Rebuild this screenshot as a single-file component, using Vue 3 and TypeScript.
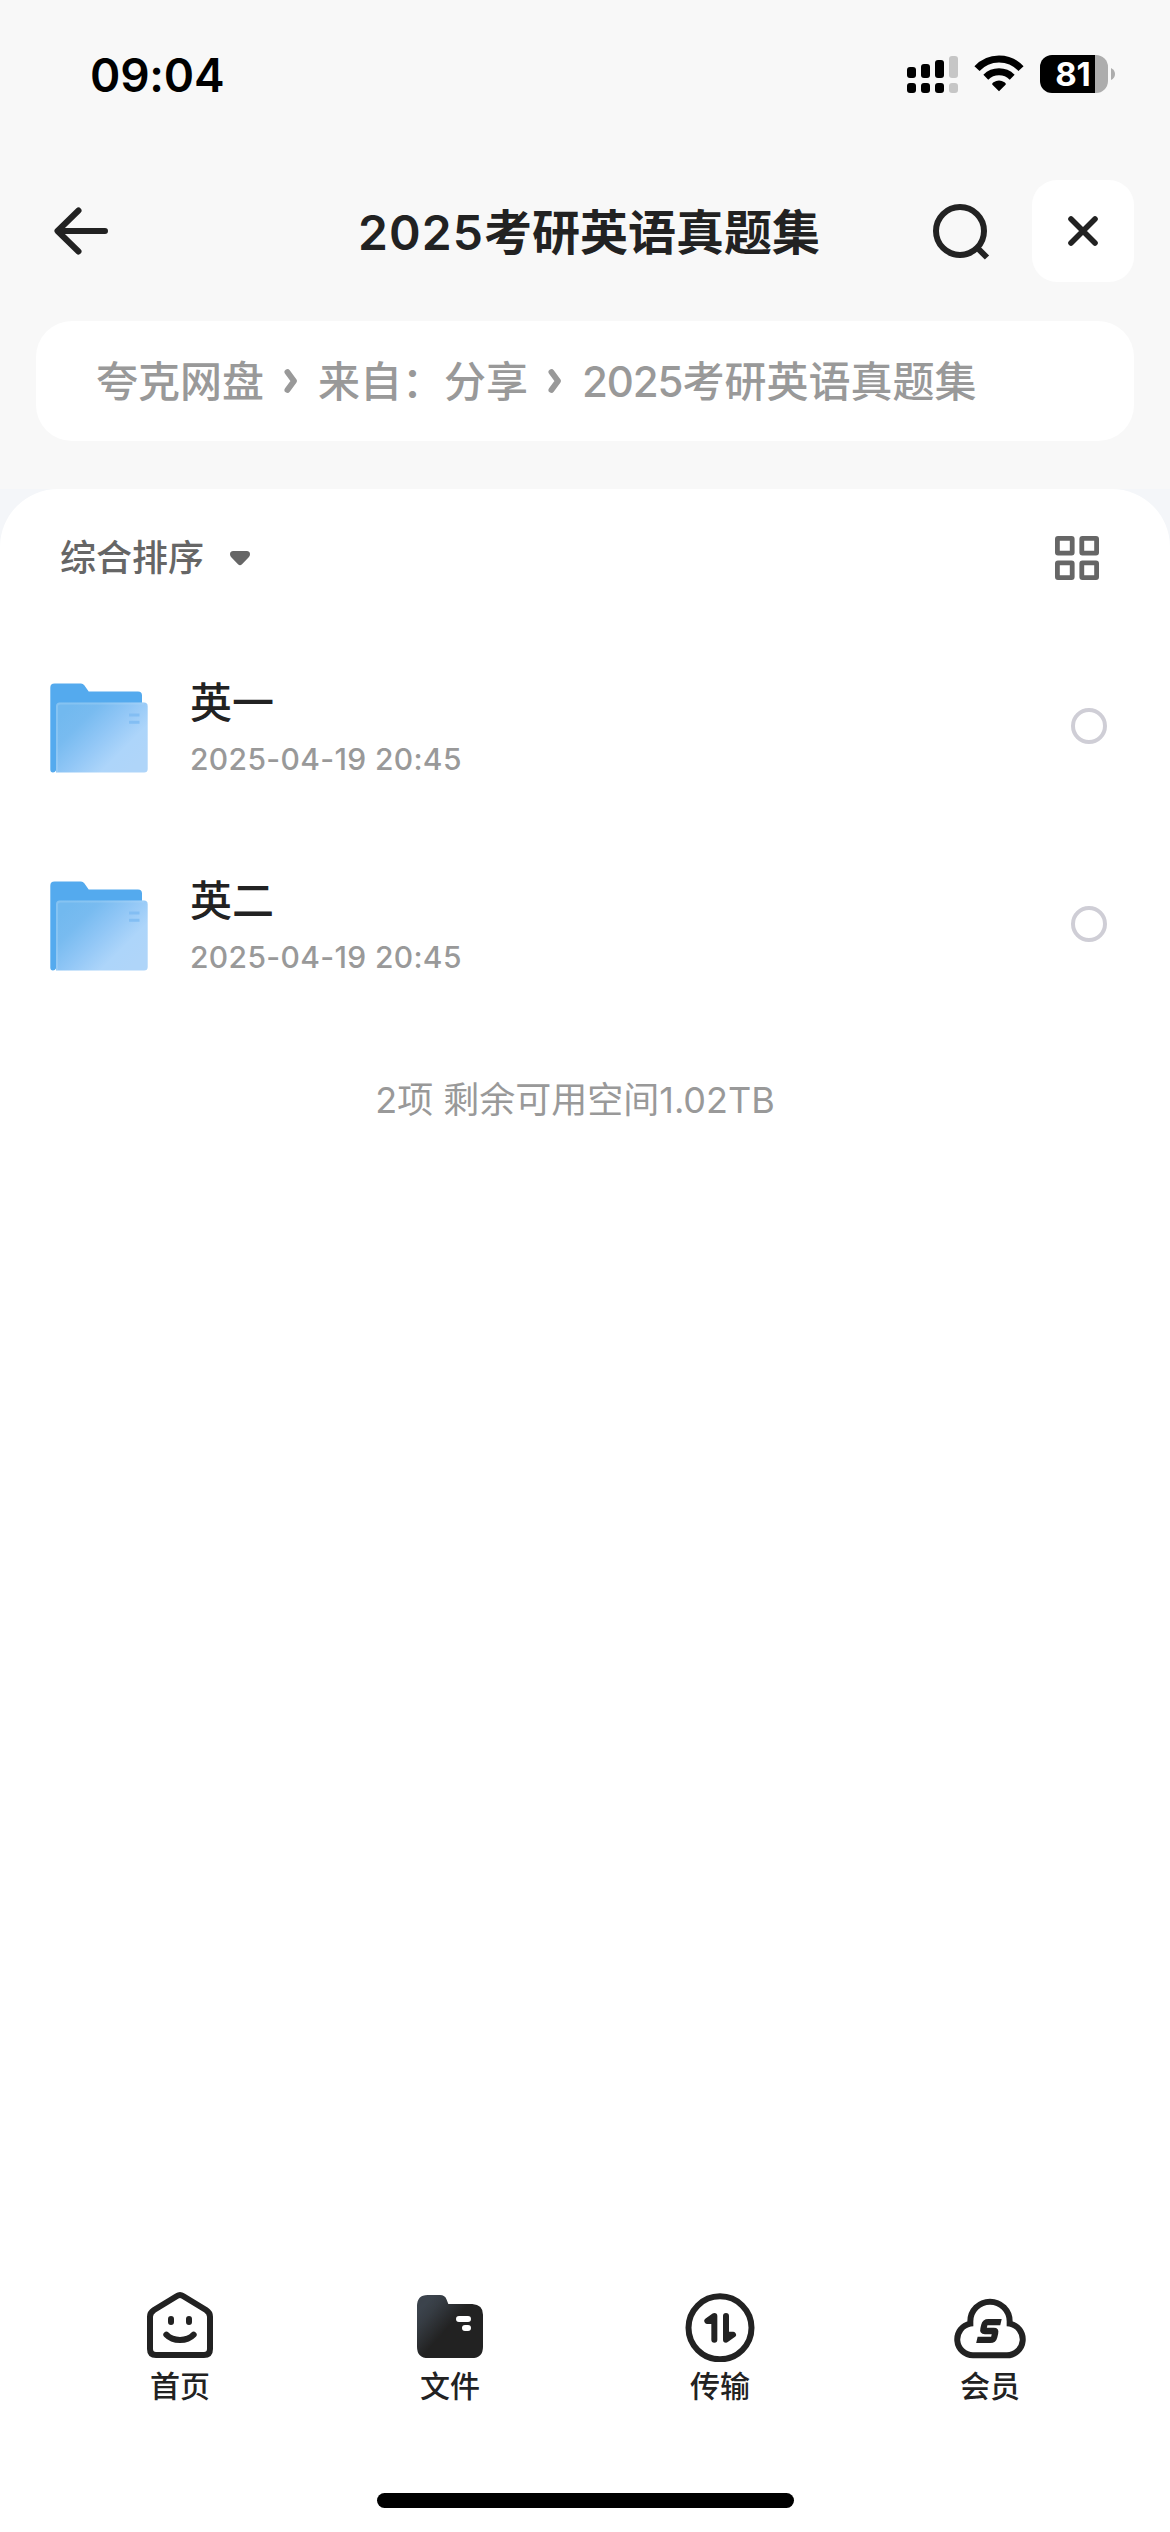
<script setup lang="ts">
interface FileItem {
  name: string
  modified: string
}

type TabIcon = 'home' | 'files' | 'transfer' | 'vip'

interface Tab {
  icon: TabIcon
  label: string
}

const signalBars = [
  { height: 11, active: true },
  { height: 14, active: true },
  { height: 18, active: true },
  { height: 22, active: false },
]

const files: FileItem[] = [
  { name: '英一', modified: '2025-04-19 20:45' },
  { name: '英二', modified: '2025-04-19 20:45' },
]

const tabs: Tab[] = [
  { icon: 'home', label: '首页' },
  { icon: 'files', label: '文件' },
  { icon: 'transfer', label: '传输' },
  { icon: 'vip', label: '会员' },
]
</script>

<template>
  <div class="screen">
    <div class="status-bar">
      <span class="time">09:04</span>
      <div class="status-icons">
        <div class="signal">
          <div v-for="(bar, i) in signalBars" :key="i" class="bar" :class="{ off: !bar.active }">
            <i :style="{ height: bar.height + 'px' }"></i>
            <i class="dot"></i>
          </div>
        </div>
        <svg class="wifi" width="50" height="38" viewBox="0 0 50 38" fill="none">
          <path d="M3 14.6A29.8 29.8 0 0 1 47 14.6" stroke="#000" stroke-width="7" />
          <path d="M11.8 23.2A19 19 0 0 1 38.2 23.2" stroke="#000" stroke-width="7" />
          <path d="M25 37.2L18.200 30.4Q17.9 29.200 19.500 28.200A10 10 0 0 1 30.500 28.200Q32.100 29.200 31.800 30.400Z" fill="#000" />
        </svg>
        <div class="battery"><span>81</span></div>
        <svg class="nub" width="4" height="12" viewBox="0 0 4 12"><path d="M0 0Q4 2 4 6T0 12Z" fill="#adadad" /></svg>
      </div>
    </div>

    <header class="header">
      <svg class="back" width="60" height="60" viewBox="0 0 60 60" fill="none" stroke="#222" stroke-width="6" stroke-linecap="round" stroke-linejoin="round">
        <path d="M27.5 9.5L6.5 30L27.5 50.5M7 30H54" />
      </svg>
      <h1><span class="num">2025</span>考研英语真题集</h1>
      <svg class="search" width="60" height="60" viewBox="0 0 60 60" fill="none" stroke="#222" stroke-width="6">
        <circle cx="30" cy="30" r="24" />
        <path d="M46.5 46L57 56.5" />
      </svg>
      <button class="close" aria-label="close">
        <svg width="36" height="36" viewBox="0 0 36 36" fill="none" stroke="#222" stroke-width="5.6" stroke-linecap="round">
          <path d="M6 6L30 30M30 6L6 30" />
        </svg>
      </button>
    </header>

    <nav class="crumbs">
      <span>夸克网盘</span>
      <svg class="chevron" width="14" height="26" viewBox="0 0 14 26"><path d="M3.4 4L10 13L3.4 22" /></svg>
      <span>来自：分享</span>
      <svg class="chevron" width="14" height="26" viewBox="0 0 14 26"><path d="M3.4 4L10 13L3.4 22" /></svg>
      <span><span class="num">2025</span>考研英语真题集</span>
    </nav>

    <div class="sheet-wrap">
      <main class="sheet">
        <div class="toolbar">
          <div class="sort">
            <span>综合排序</span>
            <svg width="20" height="15" viewBox="0 0 20 15"><path d="M3.2 0H16.8Q20 .2 20 3.2Q20 5 18.5 6.5L12 13.3Q10 15.4 8 13.3L1.5 6.5Q0 5 0 3.2Q0 .2 3.2 0Z" fill="#666" /></svg>
          </div>
          <svg class="grid" width="44" height="44" viewBox="0 0 44 44" fill="none" stroke="#666" stroke-width="4.8">
            <rect x="2.4" y="2.4" width="14.8" height="14.8" rx=".6" />
            <rect x="26.8" y="2.4" width="14.8" height="14.8" rx=".6" />
            <rect x="2.4" y="26.8" width="14.8" height="14.8" rx=".6" />
            <rect x="26.8" y="26.8" width="14.8" height="14.8" rx=".6" />
          </svg>
        </div>

        <ul class="list">
          <li v-for="file in files" :key="file.name">
            <svg class="folder" width="98" height="90" viewBox="0 0 98 90">
              <defs>
                <linearGradient id="folderFront" x1="18" y1="25" x2="80" y2="87" gradientUnits="userSpaceOnUse">
                  <stop offset="0" stop-color="#72b9ef" />
                  <stop offset=".22" stop-color="#78bbf0" />
                  <stop offset=".5" stop-color="#92c7f6" />
                  <stop offset=".78" stop-color="#add5fa" />
                  <stop offset="1" stop-color="#afd5f9" />
                </linearGradient>
              </defs>
              <path d="M4.5 .5H31Q33 .5 34.3 2.2L38.7 8.6H88Q92 8.6 92 12.6V60L6 87.5Q5 89.5 3 89.5Q.3 89.5 .3 86.5V4.7Q.3 .5 4.5 .5Z" fill="#54aaee" />
              <path d="M9.5 19.5H94Q97.7 19.5 97.7 23.2V86Q97.7 89.6 94 89.6H6V23Q6 19.5 9.5 19.5Z" fill="url(#folderFront)" />
              <path d="M7 89V23.5Q7 20.5 10 20.5H94" fill="none" stroke="#b4dafa" stroke-opacity=".3" stroke-width="2" />
              <path d="M79 32H89.5M79 39.2H89.5" stroke="#83bef3" stroke-width="3" />
            </svg>
            <div class="meta">
              <div class="name">{{ file.name }}</div>
              <div class="date">{{ file.modified }}</div>
            </div>
            <span class="radio"></span>
          </li>
        </ul>

        <p class="summary">2项 剩余可用空间1.02TB</p>
      </main>
    </div>

    <footer class="tabs">
      <div v-for="tab in tabs" :key="tab.icon" class="tab">
        <svg width="80" height="76" viewBox="0 0 240 228" fill="none" stroke="#222" stroke-width="18" stroke-linecap="round" stroke-linejoin="round">
          <template v-if="tab.icon === 'home'">
            <path d="M111 30Q120 24 129 30L198 72Q210 80 210 92V189Q210 207 192 207H48Q30 207 30 189V92Q30 80 42 72Z" />
            <path d="M93 99V108M147 99V108" />
            <path d="M79 146Q94 162 120 162T161 146" />
          </template>
          <template v-else-if="tab.icon === 'files'">
            <defs>
              <linearGradient id="filesTab" x1="45" y1="55" x2="118" y2="120" gradientUnits="userSpaceOnUse">
                <stop offset="0" stop-color="#3b434c" />
                <stop offset=".3" stop-color="#363c43" />
                <stop offset="1" stop-color="#222" />
              </linearGradient>
            </defs>
            <path d="M53 27H90Q105 27 110 41L115 54H187Q219 56 219 86V182Q219 216 185 216H55Q21 216 21 182V61Q21 27 53 27Z" fill="url(#filesTab)" stroke="none" />
            <path d="M147 99H174M165 126H174" stroke="#fff" />
          </template>
          <template v-else-if="tab.icon === 'transfer'">
            <circle cx="120" cy="125.5" r="94.5" />
            <path d="M103 161V90L82 105H103ZM138 90V161L159 146H138Z" fill="#222" />
          </template>
          <template v-else>
            <path d="M61 113V106A59 59 0 0 1 179 106V113A47.9 47.9 0 0 1 171 208H69A47.9 47.9 0 0 1 61 113Z" stroke-linejoin="miter" />
            <path transform="translate(31 0) skewX(-13)" d="M147 108.500H107Q99 108.500 99 116.500V127Q99 135 107 135H129Q137 135 137 143V153.500Q137 161.500 129 161.500H87" stroke-linecap="butt" stroke-width="19" />
          </template>
        </svg>
        <span>{{ tab.label }}</span>
      </div>
    </footer>
    <div class="home-area"><div class="home-indicator"></div></div>
  </div>
</template>

<style>
body {
  margin: 0;
  background: #fff;
}
</style>

<style scoped>
.screen {
  display: flex;
  flex-direction: column;
  width: 1170px;
  height: 2532px;
  overflow: hidden;
  background: #f8f8f8;
  color: #222;
  font-family: Inter, "Noto Sans CJK SC", sans-serif;
}

.status-bar {
  display: flex;
  justify-content: space-between;
  height: 126px;
  padding: 0 55px 54px 90px;
  box-sizing: content-box;
}

.time {
  margin-top: 46px;
  color: #000;
  font-size: 46px;
  font-weight: 600;
  letter-spacing: -0.2px;
  line-height: 58px;
}

.status-icons {
  display: flex;
  align-items: flex-start;
  padding-top: 55px;
}

.signal {
  display: flex;
  gap: 5px;
  height: 38px;
}

.bar {
  display: flex;
  flex-direction: column;
  justify-content: flex-end;
  gap: 5px;
}

.bar i {
  display: block;
  width: 9px;
  border-radius: 3px;
  background: #000;
}

.bar .dot {
  height: 10px;
}

.bar.off i {
  background: #c6c6c6;
}

.wifi {
  margin: -1px 16px 0;
}

.battery {
  display: flex;
  align-items: center;
  justify-content: center;
  width: 68px;
  height: 38px;
  padding-right: 2px;
  box-sizing: border-box;
  border-radius: 12px;
  background: linear-gradient(90deg, #000 55px, #adadad 55px);
  color: #fff;
  font-size: 33px;
  font-weight: 700;
  line-height: 38px;
}

.nub {
  margin: 13px 0 0 3px;
}

.header {
  display: flex;
  align-items: center;
  height: 102px;
  padding: 0 36px 0 51px;
}

h1 {
  flex: 1;
  margin: 0;
  padding: 3px 0 0 247px;
  font-size: 48px;
  font-weight: 600;
  line-height: 72px;
  white-space: nowrap;
}

h1 .num {
  letter-spacing: 1.1px;
}

.search {
  margin-right: 42px;
}

.close {
  display: flex;
  align-items: center;
  justify-content: center;
  width: 102px;
  height: 102px;
  padding: 0;
  border: 0;
  border-radius: 25px;
  background: #fff;
}

.crumbs {
  display: flex;
  align-items: center;
  height: 120px;
  margin: 39px 36px 48px;
  padding-left: 60px;
  box-sizing: border-box;
  border-radius: 36px;
  background: #fff;
  color: #999;
  font-size: 42px;
  font-weight: 500;
  line-height: 60px;
  white-space: nowrap;
}

.crumbs > span {
  padding-top: 2px;
}

.crumbs .num {
  letter-spacing: -1.1px;
}

.chevron {
  margin: 0 20px;
  fill: none;
  stroke: #999;
  stroke-width: 5.8;
  stroke-linecap: round;
  stroke-linejoin: round;
}

.sheet-wrap {
  flex: 1;
  background: #f4f6f9;
}

.sheet {
  height: 100%;
  border-radius: 58px 58px 0 0;
  background: #fff;
}

.toolbar {
  display: flex;
  align-items: center;
  justify-content: space-between;
  height: 138px;
  padding: 0 71px 0 60px;
}

.sort {
  display: flex;
  align-items: center;
  gap: 26px;
  color: #666;
  font-size: 36px;
  font-weight: 500;
  line-height: 54px;
}

.list {
  margin: 0;
  padding: 0;
  list-style: none;
}

.list li {
  display: flex;
  align-items: center;
  height: 198px;
  padding: 0 63px 0 50px;
}

.folder {
  margin-top: 3px;
}

.meta {
  flex: 1;
  padding-left: 42px;
}

.name {
  font-size: 42px;
  font-weight: 500;
  line-height: 60px;
}

.date {
  margin: 8px 0 2px;
  color: #999;
  font-size: 30px;
  font-weight: 500;
  letter-spacing: 0.35px;
  line-height: 36px;
}

.radio {
  width: 36px;
  height: 36px;
  box-sizing: border-box;
  border: 4px solid #cfced6;
  border-radius: 50%;
}

.summary {
  margin: 50px 0 0;
  padding-right: 20px;
  color: #999;
  font-size: 36px;
  line-height: 54px;
  text-align: center;
}

.tabs {
  display: flex;
  height: 207px;
  padding: 0 45px;
  background: #fff;
}

.tab {
  display: flex;
  flex: 1;
  flex-direction: column;
  align-items: center;
}

.tab span {
  margin-top: 2px;
  font-size: 30px;
  font-weight: 500;
  line-height: 44px;
}

.home-area {
  display: flex;
  justify-content: center;
  height: 39px;
  background: #fff;
}

.home-indicator {
  width: 417px;
  height: 15px;
  border-radius: 8px;
  background: #000;
}
</style>
